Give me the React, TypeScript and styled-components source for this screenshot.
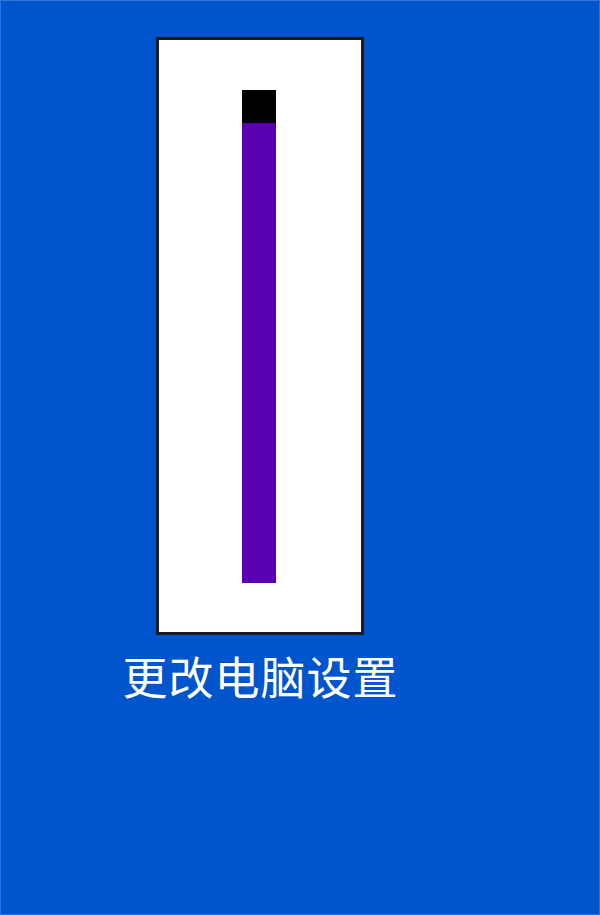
import React from 'react';
import styled, { createGlobalStyle } from 'styled-components';

const GlobalStyle = createGlobalStyle`
  html, body {
    margin: 0;
    padding: 0;
    background: #0055cc;
  }
  body {
    font-family: "Noto Sans CJK SC", "Microsoft YaHei", sans-serif;
  }
`;

const Screen = styled.div`
  box-sizing: border-box;
  width: 600px;
  height: 915px;
  background: #0055cc;
  border: 1px solid #2f72d8;
  padding-top: 36px;
`;

const Column = styled.div`
  width: 300px;
  margin-left: 109px;
  display: flex;
  flex-direction: column;
  align-items: center;
`;

const Frame = styled.div`
  box-sizing: border-box;
  width: 208px;
  height: 598px;
  background: #ffffff;
  border: 3px solid #1c1c1c;
  padding: 50px 0 49px 83px;
  display: flex;
`;

const Bar = styled.div`
  width: 34px;
  height: 100%;
  background: #5a00b4;
  display: flex;
  flex-direction: column;
`;

const BarCap = styled.div<{ $size: number }>`
  height: ${p => p.$size}px;
  background: #000000;
`;

const Caption = styled.div`
  margin-top: 14px;
  margin-left: 1px;
  color: #ffffff;
  font-size: 45px;
  line-height: 1.2;
  letter-spacing: 1px;
  white-space: nowrap;
`;

const App: React.FC = () => {
  return (
    <>
      <GlobalStyle />
      <Screen>
        <Column>
          <Frame>
            <Bar>
              <BarCap $size={33} />
            </Bar>
          </Frame>
          <Caption>更改电脑设置</Caption>
        </Column>
      </Screen>
    </>
  );
};

export default App;
